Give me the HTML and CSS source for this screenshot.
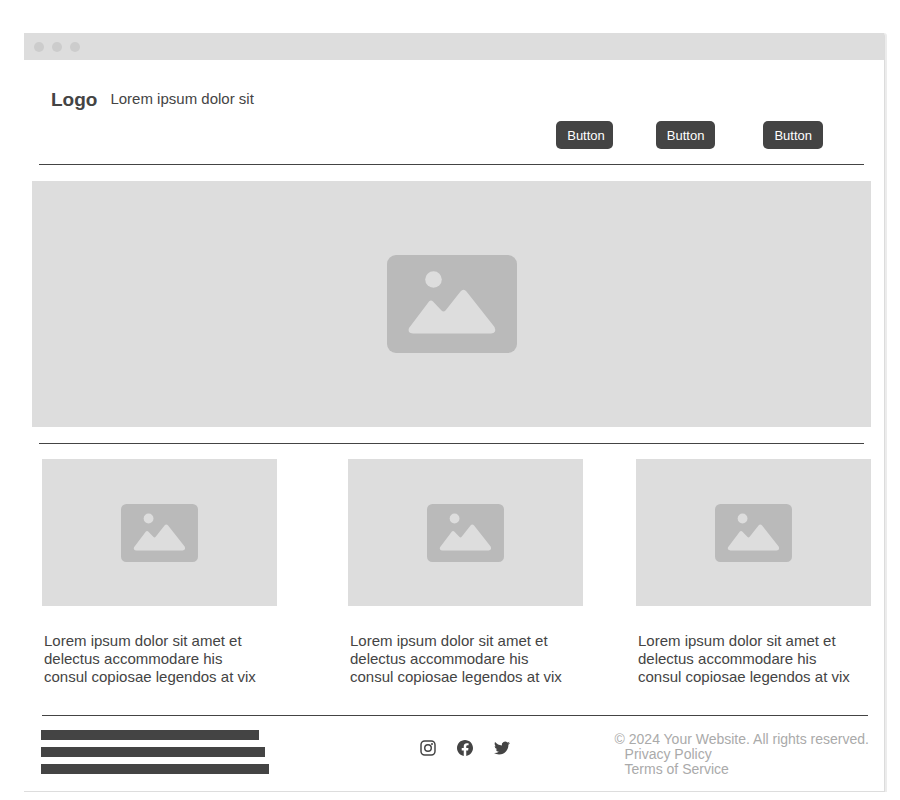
FILE: index.html
```html
<!DOCTYPE html>
<html lang="en">
<head>
<meta charset="utf-8">
<title>Your Website</title>
<link rel="stylesheet" href="styles.css">
</head>
<body>
<svg class="sprite" aria-hidden="true">
  <symbol id="picture" viewBox="0 0 130 98">
    <rect width="130" height="98" rx="9" fill="#bababa"/>
    <circle cx="46.500" cy="24.500" r="8.300" fill="#dddddd"/>
    <path d="M22 73 L42 46.500 Q44 44.500 46 46.500 L54.500 55.500 Q56.500 57.500 58.500 55.500 L73.500 36.500 Q76.500 33 79.500 36.500 L107.500 72 Q110 78 104 78.500 H26 Q20 78 22 73Z" fill="#dddddd"/>
  </symbol>
</svg>
<div class="window">
  <div class="titlebar"><span class="dot"></span><span class="dot"></span><span class="dot"></span></div>
  <header class="header">
    <div class="brand"><strong class="logo">Logo</strong><span class="tagline">Lorem ipsum dolor sit</span></div>
    <nav class="actions">
      <button class="button button-first" type="button">Button</button>
      <button class="button button-second" type="button">Button</button>
      <button class="button" type="button">Button</button>
    </nav>
  </header>
  <main>
    <hr class="rule">
    <div class="picture hero"><svg class="hero-icon"><use href="#picture"/></svg></div>
    <hr class="rule">
    <div class="cards">
      <article class="card">
        <div class="picture thumb"><svg class="thumb-icon"><use href="#picture"/></svg></div>
        <p class="copy">Lorem ipsum dolor sit amet et<br>delectus accommodare his<br>consul copiosae legendos at vix</p>
      </article>
      <article class="card">
        <div class="picture thumb"><svg class="thumb-icon"><use href="#picture"/></svg></div>
        <p class="copy">Lorem ipsum dolor sit amet et<br>delectus accommodare his<br>consul copiosae legendos at vix</p>
      </article>
      <article class="card">
        <div class="picture thumb"><svg class="thumb-icon"><use href="#picture"/></svg></div>
        <p class="copy">Lorem ipsum dolor sit amet et<br>delectus accommodare his<br>consul copiosae legendos at vix</p>
      </article>
    </div>
  </main>
  <footer class="footer">
    <div class="bars"><div class="bar bar-short"></div><div class="bar bar-medium"></div><div class="bar"></div></div>
    <div class="social">
      <a href="#" aria-label="Instagram"><svg viewBox="0 0 24 24" fill="none" stroke="#444444"><rect x="1.500" y="1.500" width="21" height="21" rx="5.500" stroke-width="2.200"/><circle cx="12" cy="12" r="4.900" stroke-width="2.200"/><circle cx="18" cy="6" r="1.500" fill="#444444" stroke="none"/></svg></a>
      <a href="#" aria-label="Facebook"><svg viewBox="0 0 24 24" fill="#444444"><path d="M24 12.073C24 5.405 18.627 0 12 0S0 5.405 0 12.073C0 18.099 4.388 23.094 10.125 24v-8.437H7.078v-3.490h3.047v-2.660c0-3.025 1.792-4.697 4.533-4.697 1.312 0 2.686.236 2.686.236v2.971h-1.513c-1.491 0-1.956.930-1.956 1.886v2.264h3.328l-.532 3.490h-2.796V24C19.612 23.094 24 18.099 24 12.073z"/></svg></a>
      <a href="#" aria-label="Twitter"><svg viewBox="0 0 24 24" fill="#444444"><path d="M23.953 4.570a10 10 0 01-2.825.775 4.958 4.958 0 002.163-2.723c-.951.555-2.005.959-3.127 1.184a4.920 4.920 0 00-8.384 4.482C7.690 8.095 4.067 6.130 1.640 3.162a4.822 4.822 0 00-.666 2.475c0 1.710.870 3.213 2.188 4.096a4.904 4.904 0 01-2.228-.616v.060a4.923 4.923 0 003.946 4.827 4.996 4.996 0 01-2.212.085 4.936 4.936 0 004.604 3.417 9.867 9.867 0 01-6.102 2.105c-.390 0-.779-.023-1.170-.067a13.995 13.995 0 007.557 2.209c9.053 0 13.998-7.496 13.998-13.985 0-.210 0-.420-.015-.630A9.935 9.935 0 0024 4.590z"/></svg></a>
    </div>
    <div class="legal">
      <span>© 2024 Your Website. All rights reserved.</span>
      <a href="#">Privacy Policy</a>
      <a href="#">Terms of Service</a>
    </div>
  </footer>
</div>
</body>
</html>
```
FILE: styles.css
```css
* { box-sizing: border-box; }

body {
  margin: 0;
  padding: 33px 13px 8px 24px;
  background: #ffffff;
  color: #444444;
  font-family: "Liberation Sans", Arial, sans-serif;
  font-size: 15px;
}

.sprite { position: absolute; width: 0; height: 0; }

.window {
  margin-right: 2px;
  border-right: 1px solid #dcdcdc;
  border-bottom: 1px solid #dddddd;
  border-top-right-radius: 3px;
  box-shadow: 2px 0 0 #ececec;
}

.titlebar {
  display: flex;
  align-items: center;
  gap: 8px;
  height: 27px;
  padding-left: 10px;
  background: #dddddd;
}

.dot { width: 10px; height: 10px; border-radius: 50%; background: #cccccc; }

.header { padding: 29px 61px 0 27px; }

.brand { display: flex; align-items: flex-start; gap: 13px; }

.logo { font-size: 19px; line-height: 22px; }
.tagline { line-height: 19px; }

.actions { display: flex; justify-content: flex-end; margin: 10px 0 15px; }

.button {
  height: 28px;
  padding: 0 11px;
  border: 0;
  border-radius: 5px;
  background: #444444;
  color: #ffffff;
  font: 13px "Liberation Sans", Arial, sans-serif;
}

.button-first { margin-right: 43px; padding-right: 8px; }
.button-second { margin-right: 48px; }

.rule { height: 1px; margin: 0 20px 0 15px; border: 0; background: #444444; }

.picture { display: flex; align-items: center; justify-content: center; background: #dddddd; }

.hero { height: 246px; margin: 16px 13px 16px 8px; }
.hero-icon { width: 130px; height: 98px; }

.cards {
  display: grid;
  grid-template-columns: 306fr 288fr 235fr;
  margin: 15px 13px 0 18px;
}

.card { width: 235px; }
.thumb { height: 147px; }
.thumb-icon { width: 77px; height: 58px; }
.copy { margin: 26px 0 29px 2px; line-height: 18px; white-space: nowrap; }

.footer {
  display: flex;
  justify-content: space-between;
  margin: 0 16px 0 18px;
  padding-bottom: 14px;
  border-top: 1px solid #444444;
}

.bars { display: flex; flex-direction: column; gap: 7px; width: 228px; margin: 14px 0 0 -1px; }
.bar { height: 10px; background: #444444; }
.bar-short { width: 218px; }
.bar-medium { width: 224px; }

.social { display: flex; gap: 21px; margin: 24px 0 0 47px; }
.social svg { display: block; width: 16px; height: 16px; }

.legal {
  display: flex;
  flex-direction: column;
  margin: 16px -1px 0 0;
  font-size: 14px;
  line-height: 15px;
  color: #aaaaaa;
}
.legal a { margin-left: 10px; color: inherit; text-decoration: none; }
```
